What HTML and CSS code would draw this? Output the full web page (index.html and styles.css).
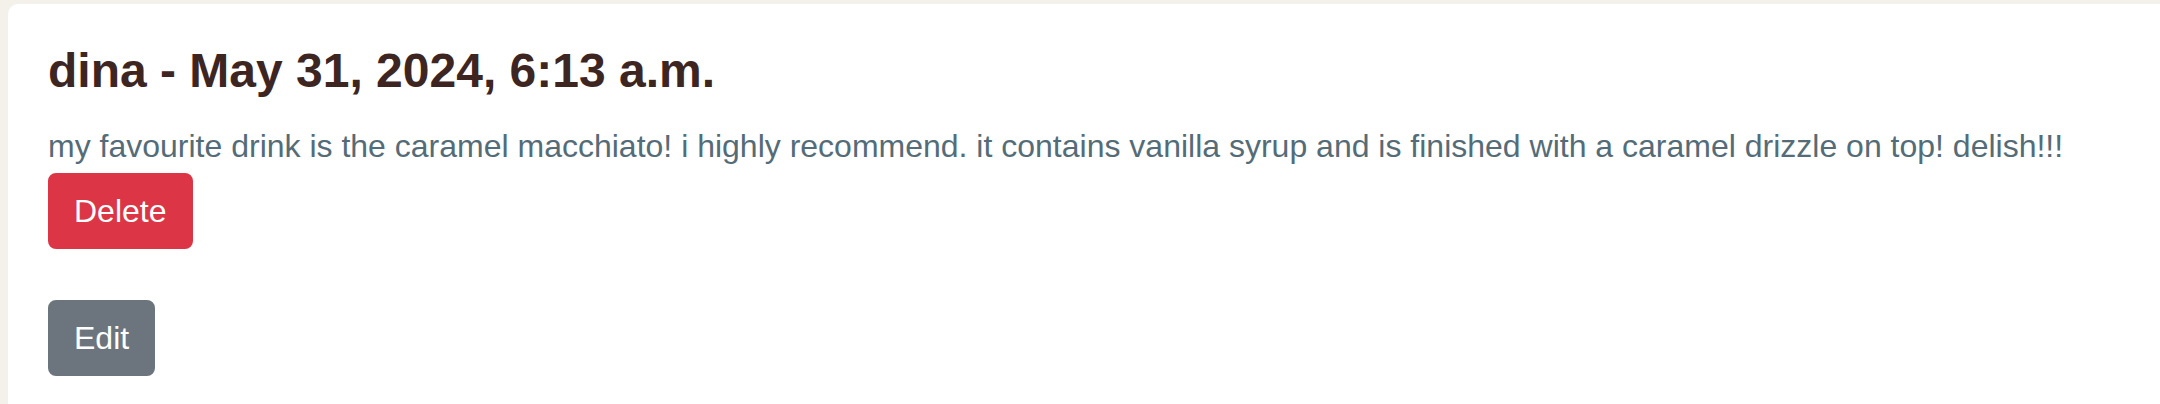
FILE: index.html
```html
<!DOCTYPE html>
<html lang="en">
<head>
<meta charset="utf-8">
<title>Review</title>
<link rel="stylesheet" href="styles.css">
</head>
<body>
<main class="page">
  <article class="card">
    <h2 class="card-title">dina - May 31, 2024, 6:13 a.m.</h2>
    <p class="card-text">my favourite drink is the caramel macchiato! i highly recommend. it contains vanilla syrup and is finished with a caramel drizzle on top! delish!!!</p>
    <div class="actions">
      <button class="btn btn-danger" type="button">Delete</button>
      <button class="btn btn-secondary" type="button">Edit</button>
    </div>
  </article>
</main>
</body>
</html>
```
FILE: styles.css
```css
html, body {
  margin: 0;
  padding: 0;
  height: 100%;
}
body {
  background: #f4f1ea;
  font-family: "Liberation Sans", Arial, Helvetica, sans-serif;
  overflow: hidden;
}
.page {
  padding: 4px 0 0 8px;
}
.card {
  background: #ffffff;
  border-radius: 10px 0 0 0;
  min-height: 420px;
  padding: 38px 40px 0 40px;
  box-sizing: border-box;
}
.card-title {
  margin: 0;
  font-size: 48px;
  line-height: 1.2;
  font-weight: 700;
  color: #3d2622;
}
.card-text {
  margin: 22px 0 3px 0;
  font-size: 32px;
  line-height: 1.5;
  color: #546c78;
}
.actions {
  display: flex;
  flex-direction: column;
  align-items: flex-start;
  gap: 51px;
}
.btn {
  font-family: inherit;
  font-size: 32px;
  line-height: 48px;
  padding: 12px 24px;
  border: 2px solid transparent;
  border-radius: 8px;
  color: #ffffff;
  cursor: pointer;
}
.btn-danger {
  background: #dc3545;
  border-color: #dc3545;
}
.btn-secondary {
  background: #6c757d;
  border-color: #6c757d;
}
```
